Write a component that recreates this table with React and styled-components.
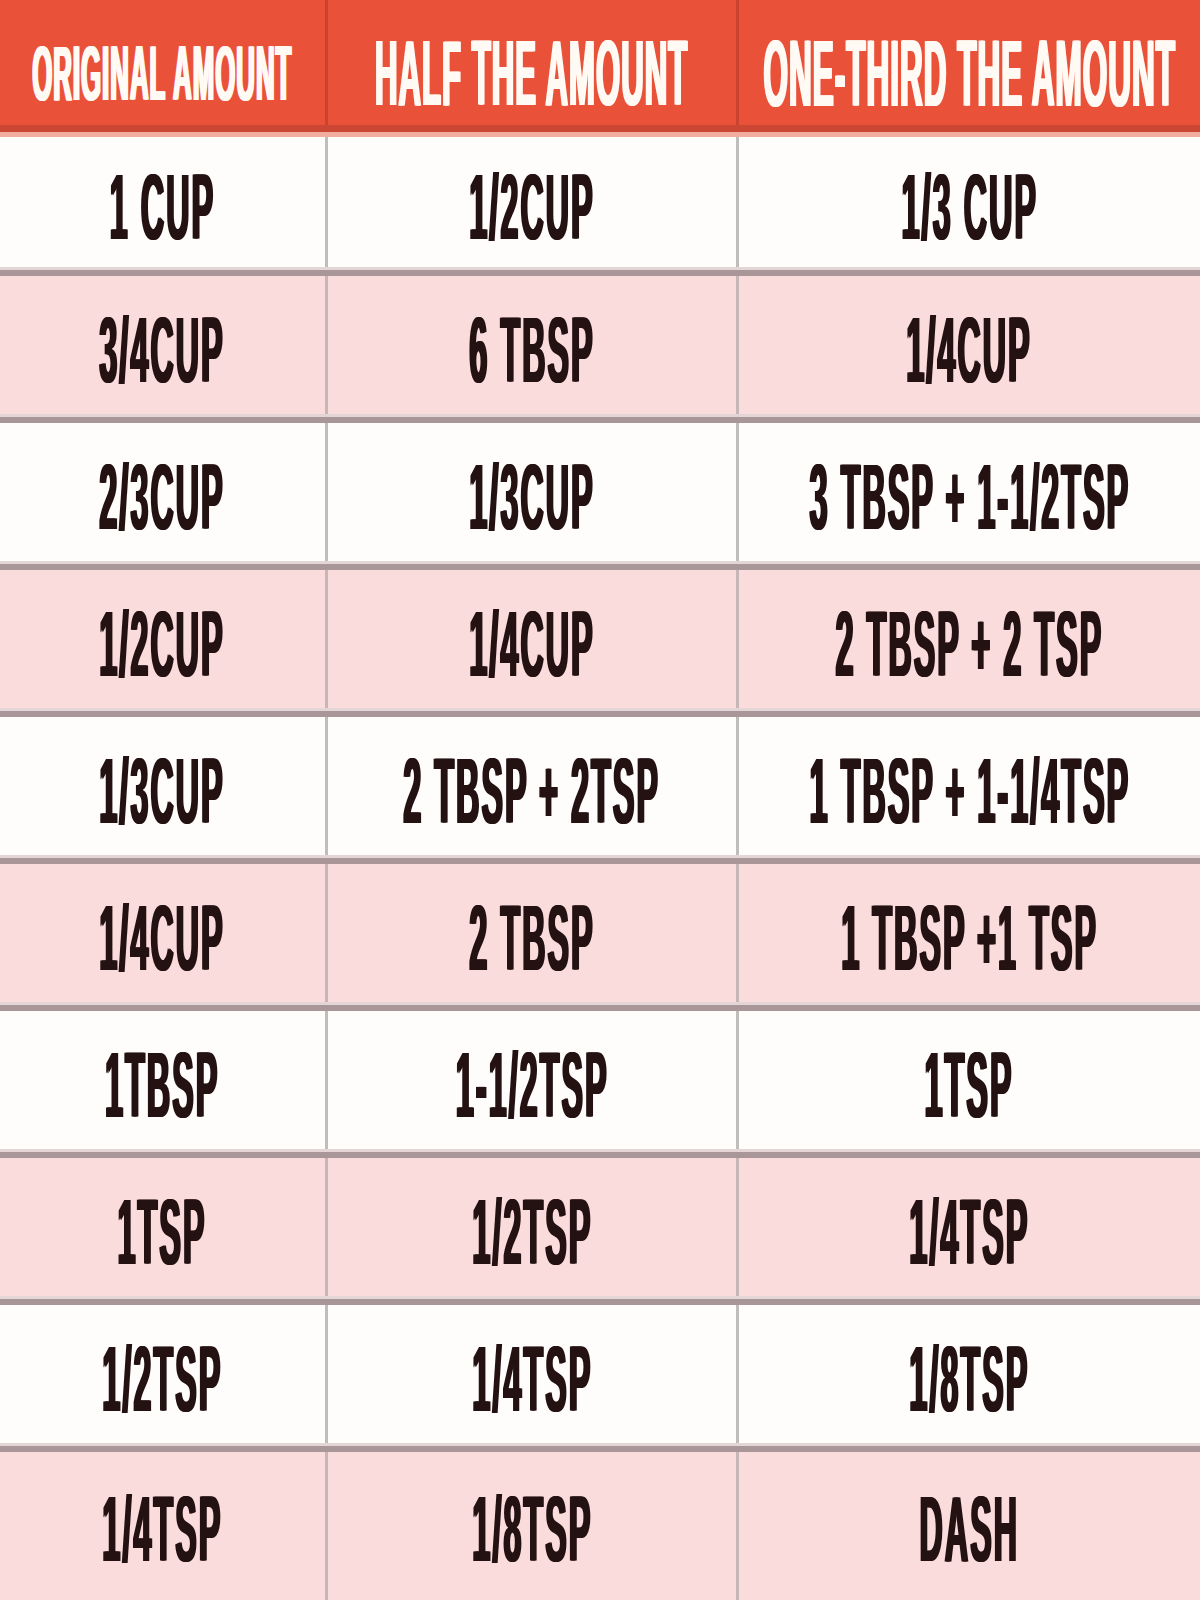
import React from "react";
import styled, { createGlobalStyle } from "styled-components";

const rows = [
  ["1 CUP", "1/2CUP", "1/3 CUP"],
  ["3/4CUP", "6 TBSP", "1/4CUP"],
  ["2/3CUP", "1/3CUP", "3 TBSP + 1-1/2TSP"],
  ["1/2CUP", "1/4CUP", "2 TBSP + 2 TSP"],
  ["1/3CUP", "2 TBSP + 2TSP", "1 TBSP + 1-1/4TSP"],
  ["1/4CUP", "2 TBSP", "1 TBSP +1 TSP"],
  ["1TBSP", "1-1/2TSP", "1TSP"],
  ["1TSP", "1/2TSP", "1/4TSP"],
  ["1/2TSP", "1/4TSP", "1/8TSP"],
  ["1/4TSP", "1/8TSP", "DASH"],
];

const headers = [
  { text: "ORIGINAL AMOUNT", size: 77 },
  { text: "HALF THE AMOUNT", size: 93 },
  { text: "ONE-THIRD THE AMOUNT", size: 94 },
];

export default function App() {
  return (
    <>
      <GlobalStyle />
      <Table>
        <HeaderRow>
          {headers.map((h) => (
            <HeaderCell key={h.text}>
              <HeaderLabel $size={h.size}>{h.text}</HeaderLabel>
            </HeaderCell>
          ))}
        </HeaderRow>
        {rows.map((row, i) => (
          <Row key={i} $pink={i % 2 === 1} $first={i === 0}>
            {row.map((value, j) => (
              <Cell key={j} $pink={i % 2 === 1}>
                <Label>{value}</Label>
              </Cell>
            ))}
          </Row>
        ))}
      </Table>
    </>
  );
}

const headerRed = "#ea5139";
const textDark = "#241213";

const GlobalStyle = createGlobalStyle`
  body {
    margin: 0;
    background: #fdf6f6;
    font-family: "Liberation Sans", Arial, sans-serif;
  }
`;

const Table = styled.div`
  display: flex;
  flex-direction: column;
  width: 1200px;
  min-height: 1600px;
  overflow: hidden;
`;

const columns = "328px 411px minmax(0, 1fr)";

const HeaderRow = styled.div`
  display: grid;
  grid-template-columns: ${columns};
  height: 137px;
  box-sizing: border-box;
  background: ${headerRed};
  border-bottom: 5px solid #f2ad9f;
  box-shadow: inset 0 -7px 0 #cc4733;
  padding-bottom: 7px;
`;

const HeaderCell = styled.div`
  display: flex;
  align-items: center;
  justify-content: center;
  min-width: 0;
  padding-top: 22px;
  border-right: 3px solid #c9432f;

  &:last-child {
    border-right: none;
  }
`;

const HeaderLabel = styled.span`
  display: inline-block;
  flex-shrink: 0;
  white-space: nowrap;
  font-size: ${(p) => p.$size}px;
  font-weight: 700;
  line-height: 1;
  letter-spacing: 3px;
  color: #fffaf4;
  transform: scaleX(0.335);
  text-shadow: 3px 0 0 #fffaf4, -3px 0 0 #fffaf4;
`;

const Row = styled.div`
  display: grid;
  grid-template-columns: ${columns};
  box-sizing: border-box;
  height: ${(p) => (p.$first ? "133px" : "147px")};
  background: ${(p) => (p.$pink ? "#fbdcdc" : "#fffcfc")};
  border-top: ${(p) => (p.$first ? "none" : "6px solid #a99698")};
  box-shadow: ${(p) => (p.$first ? "none" : "0 -3px 0 #e4d5d6")};

  &:last-child {
    flex: 1;
  }
`;

const Cell = styled.div`
  display: flex;
  align-items: center;
  justify-content: center;
  min-width: 0;
  padding-top: 6px;
  border-right: 3px solid ${(p) => (p.$pink ? "#c6b6b7" : "#c2bdbd")};

  &:last-child {
    border-right: none;
  }
`;

const Label = styled.span`
  display: inline-block;
  flex-shrink: 0;
  white-space: nowrap;
  font-size: 92px;
  font-weight: 700;
  line-height: 1;
  letter-spacing: 6px;
  color: ${textDark};
  transform: scaleX(0.35);
  text-shadow: 3px 0 0 ${textDark}, -3px 0 0 ${textDark};
`;
